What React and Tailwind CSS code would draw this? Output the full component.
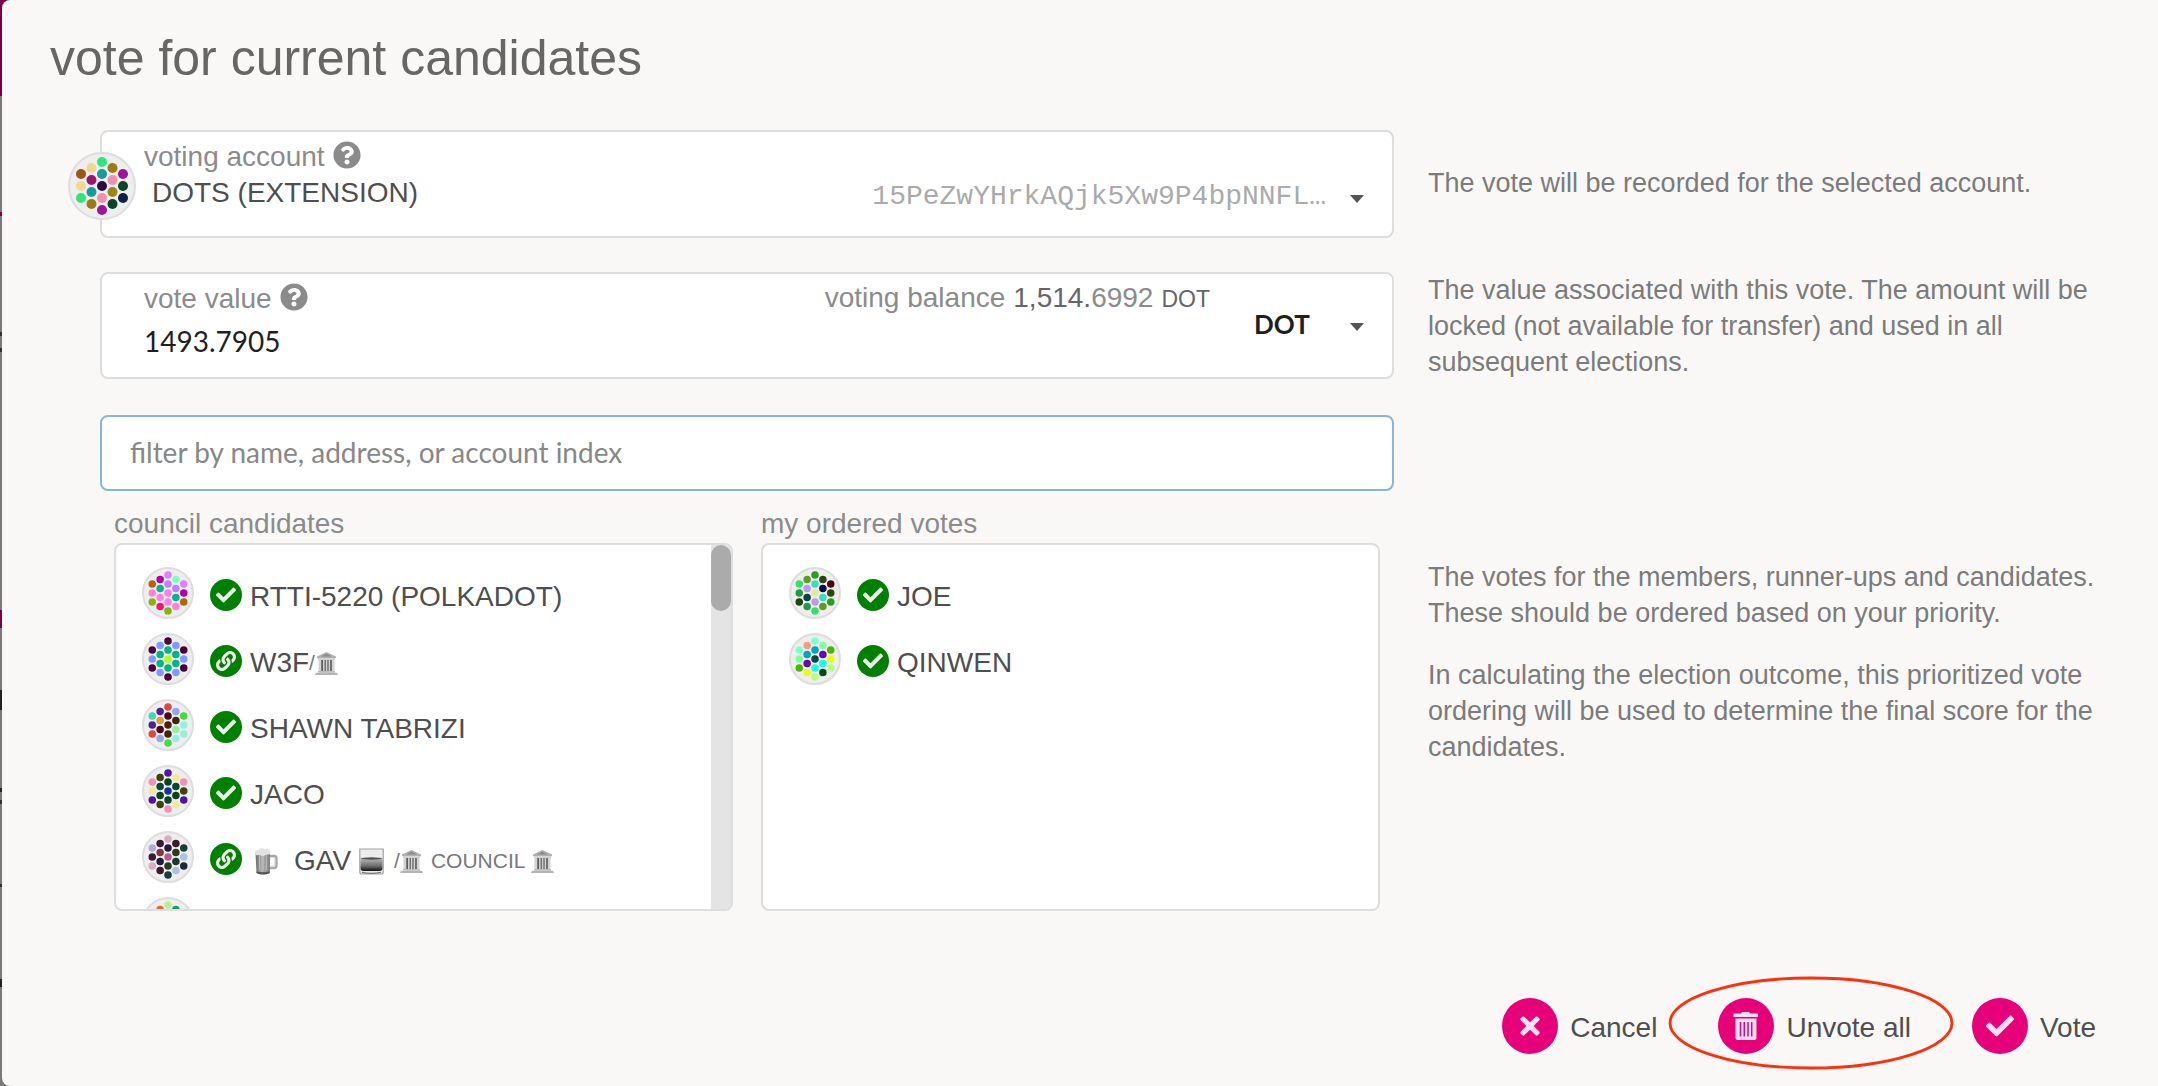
import React, { useState } from "react";
import { FaQuestionCircle, FaCheck, FaLink, FaTimes } from "react-icons/fa";

/* ---------------- Data ---------------- */
// 19 dots per icon, column by column, left to right and top to bottom
const DOTS = [
  [11, 20], [11, 32], [11, 44],
  [21.5, 14], [21.5, 26], [21.5, 38], [21.5, 50],
  [32, 8], [32, 20], [32, 32], [32, 44], [32, 56],
  [42.5, 14], [42.5, 26], [42.5, 38], [42.5, 50],
  [53, 20], [53, 32], [53, 44],
];

const ICONS = {
  dots: "#a05514 #efd892 #2ee67b #efd892 #9c1473 #149c9c #9c7a14 #2ee67b #149c9c #2a0a4a #f28fad #9c1499 #9c7a14 #f28fad #9c8514 #0a4527 #9c1499 #0a4527 #0a2345",
  rtti: "#b56400 #ff80d4 #85b500 #b300ac #00b590 #ff80e6 #ff0f6b #df80ff #bf80ff #ff80d4 #ff80e6 #85b500 #80ffc3 #bf80ff #00b590 #ff80d4 #df80ff #b300ac #b56400",
  w3f: "#4d0038 #8099ff #4d0038 #8099ff #00b582 #00b582 #8099ff #4d0038 #00b582 #b7ff0f #00b582 #4d0038 #8099ff #00b582 #00b582 #8099ff #4d0038 #8099ff #4d0038",
  shawn: "#3cdcae #4f1f9c #dc483c #4f1f9c #dc9f3c #450a16 #97a5ee #dc483c #450a16 #45240a #45240a #42dc3c #97a5ee #45240a #97eea3 #97eee3 #42dc3c #97eee3 #97eed3",
  jaco: "#f291b8 #f2eb91 #5214a8 #3a450a #0a4535 #0a4518 #3a450a #5214a8 #0a4518 #1931a8 #0a4535 #f291b8 #f2eb91 #0a4535 #0a4518 #f2eb91 #f291b8 #3a450a #5214a8",
  gav: "#aeacdb #3c1a33 #dbacc0 #3c1a33 #833640 #241a3c #3c1a2a #dbacc0 #241a3c #bd5a8c #2a3c1a #1a3c3a #3c1a2a #2a3c1a #1a3c26 #acc3db #1a3c3a #acc3db #1a2a3c",
  next: "#dc5a2c #b8f090 #1f9c7a #dc6a3c #b8f090 #1f9c7a #dc6a3c #b8f090 #1f9c7a #b8f090 #dc6a3c #1f9c7a #1f9c7a #b8f090 #1f9c7a #dc6a3c #b8f090 #1f9c7a #b8f090",
  joe: "#33e066 #1f9c45 #1f450a #5f9c1f #c397f0 #0a4545 #1f9c45 #2f9c1f #33e0bf #d9f097 #c397f0 #33e066 #2f450a #0a0a45 #33e0bf #5f9c1f #450a1a #2f450a #2f9c1f",
  qinwen: "#80ffc8 #80ff9e #4bb500 #ff9980 #00a5b5 #6b00b5 #e8ff0f #80ffc8 #00a5b5 #004d38 #0fffe7 #b8ff80 #80ff9e #6b00b5 #0fffe7 #004d1a #4bb500 #e8ff0f #b8ff80",
};

const candidates = [
  { id: "rtti", name: "RTTI-5220 (POLKADOT)" },
  { id: "w3f", name: "W3F", linked: true, temple: true },
  { id: "shawn", name: "SHAWN TABRIZI" },
  { id: "jaco", name: "JACO" },
  { id: "gav", name: "GAV", linked: true, drinks: true, temple: true, sub: "COUNCIL" },
  { id: "next", name: "" },
];

const votes = [
  { id: "joe", name: "JOE" },
  { id: "qinwen", name: "QINWEN" },
];

/* ---------------- Drawings ---------------- */
const Identicon = ({ id, className }) => (
  <svg viewBox="0 0 64 64" className={`shrink-0 rounded-full border-2 border-[#ddd] bg-[#eee] ${className}`} aria-hidden="true">
    {ICONS[id].split(" ").map((fill, i) => (
      <circle key={i} cx={DOTS[i][0]} cy={DOTS[i][1]} r="5" fill={fill} />
    ))}
  </svg>
);

const Temple = () => (
  <svg viewBox="0 0 23 23" className="size-[23px] shrink-0" aria-hidden="true">
    <path d="M11.5 0 21 4.5v1.8H2V4.500z" fill="#b0b0b0" />
    <path d="M11.500 1.500 17 4.400H6z" fill="#8c8c8c" />
    <path d="M3 6.300h17v1.700H3z" fill="#cfcfcf" />
    <path d="M4 8h15v11H4z" fill="#5a5a5a" />
    <path d="M3.500 8h2.800v11H3.500zM8 8h1.600v11H8zM10.800 8h1.600v11h-1.600zM13.600 8h1.600v11h-1.600zM16.800 8h2.700v11h-2.700z" fill="#d2d2d2" />
    <path d="M3 19h17v1.700H3z" fill="#bdbdbd" />
    <path d="M1 20.700h21L23 23H0z" fill="#b4b4b4" />
  </svg>
);

const Beer = () => (
  <svg viewBox="0 0 24 27" className="h-[27px] w-6 shrink-0" aria-hidden="true">
    <defs>
      <linearGradient id="beer" x1="0" x2="1">
        <stop offset="0" stopColor="#6a6a6a" />
        <stop offset="0.450" stopColor="#b4b4b4" />
        <stop offset="1" stopColor="#808080" />
      </linearGradient>
    </defs>
    <path d="M15.500 8h4.500q2.500 0 2.500 2.500v7q0 2.500-2.500 2.500h-4.500" fill="none" stroke="#a8a8a8" strokeWidth="2.400" />
    <path d="M16 9.800h3.500q1.200 0 1.200 1.200v6q0 1.200-1.200 1.200H16" fill="none" stroke="#d8d8d8" strokeWidth="1" />
    <path d="M1.500 5h14.500v20q-7 3-13.500 0z" fill="url(#beer)" />
    <path d="M5.500 7v15M9 7v15M12.500 7v15" stroke="#c8c8c8" strokeWidth="0.700" />
    <path d="M2.500 23.500q6.500 1.500 13 0V25q-6.500 3-13 0z" fill="#555" />
    <path d="M1 6Q0 2.500 4 2q3-3 6.500-1Q15 0 16.500 4q.5 2.500-2 2.500-2.500-.5-4 1T6 7q-2-.5-3 .5z" fill="#e2e2e2" />
  </svg>
);

const Glass = () => (
  <svg viewBox="0 0 25 27" className="h-[27px] w-[25px] shrink-0" aria-hidden="true">
    <defs>
      <linearGradient id="whisky" x1="0" y1="0" x2="0" y2="1">
        <stop offset="0" stopColor="#b8b8b8" />
        <stop offset="0.600" stopColor="#6c6c6c" />
        <stop offset="1" stopColor="#111" />
      </linearGradient>
    </defs>
    <path d="M.8 1v23q0 2 2 2h19.400q2 0 2-2V1z" fill="#ececec" stroke="#a2a2a2" strokeWidth="1.200" />
    <path d="M1.500 10.500h22V20q0 3-3 3h-16q-3 0-3-3z" fill="url(#whisky)" />
    <ellipse cx="12.500" cy="10.500" rx="10.800" ry="1.200" fill="#555" />
    <path d="M3 24.300q9.500 2 19 0" fill="none" stroke="#777" strokeWidth="1.200" />
  </svg>
);

const Caret = () => (
  <svg viewBox="0 0 14 8" className="h-2 w-3.5" aria-hidden="true">
    <path d="M0 0h14L7 8z" fill="#555" />
  </svg>
);

const TrashIcon = () => (
  <svg viewBox="0 0 26 28" className="h-7 w-[26px]" aria-hidden="true">
    <path
      fillRule="evenodd"
      fill="#ffe0f0"
      d="M9 0h7l1 1.500h7.500q.5 0 .5.500V5H0.500V2q0-.5.500-.5h7zM2.500 6.500h21V26q0 2-2 2h-17q-2 0-2-2zM6.700 10v14.500h1.500V10zM10.500 10v14.500H12V10zM14.300 10v14.500h1.500V10zM18 10v14.500h1.500V10z"
    />
  </svg>
);

/* ---------------- Pieces ---------------- */
const FieldLabel = ({ htmlFor, children }) => (
  <div className="flex items-center gap-2 text-[#8b8b8b]">
    <label htmlFor={htmlFor}>{children}</label>
    <FaQuestionCircle className="mb-1 size-7" aria-hidden="true" />
  </div>
);

const Person = ({ person }) => (
  <li className="flex h-[66px] items-center gap-4">
    <Identicon id={person.id} className="size-[52px]" />
    {person.name && (
      <div className="flex items-center gap-2 pt-1 text-[#4e4e4e]">
        <span className="flex size-8 shrink-0 items-center justify-center rounded-full bg-[#008000] text-[#eee]">
          {person.linked ? <FaLink className="size-5" /> : <FaCheck className="size-5" />}
        </span>
        <span className="flex items-center pt-1">
          {person.drinks && <span className="pr-4 pl-1"><Beer /></span>}
          <span>{person.name}</span>
          {person.drinks && <span className="pr-2.5 pl-2"><Glass /></span>}
          {person.temple && (
            <span className="flex items-center text-[21px] text-[#777]">
              <span>/</span>
              <Temple />
              {person.sub && <span className="pr-1.5 pl-2">{person.sub}</span>}
              {person.sub && <Temple />}
            </span>
          )}
        </span>
      </div>
    )}
  </li>
);

const ActionButton = ({ label, icon, onClick }) => (
  <button type="button" onClick={onClick} className="flex items-center gap-3 text-[#4e4e4e]">
    <span className="flex size-14 items-center justify-center rounded-full bg-[#e6007a] text-[#ffe0f0]">{icon}</span>
    <span className="pt-1">{label}</span>
  </button>
);

const Help = ({ children }) => (
  <div className="-mt-0.5 flex flex-col justify-center gap-[26px] text-[27px] text-[#7b7b7b]">{children}</div>
);

// Sliver of the page that stays visible beside the dialog
const Backdrop = () => (
  <div className="flex w-3 flex-col bg-[#7a7a7a] [grid-area:1/1]" aria-hidden="true">
    <div className="h-24 bg-[#7a0041]" />
    <div className="mt-[116px] h-1 bg-[#7a0041]" />
    <div className="mt-[116px] h-1 bg-[#333]" />
    <div className="mt-3 h-1 bg-[#333]" />
    <div className="mt-[258px] h-[18px] bg-[#7a0041]" />
    <div className="mt-[62px] h-5 bg-[#222]" />
    <div className="mt-[78px] h-1 bg-[#222]" />
    <div className="mt-2 h-1 bg-[#333]" />
    <div className="mt-20 h-[3px] bg-[#333]" />
    <div className="mt-[92px] h-2 bg-[#222]" />
  </div>
);

/* ---------------- Component ---------------- */
export default function App() {
  const [value, setValue] = useState("1493.7905");
  const [filter, setFilter] = useState("");
  const [ordered, setOrdered] = useState(votes);

  const shown = candidates.filter((c) => c.name.toLowerCase().includes(filter.toLowerCase()));

  return (
    <div className="grid min-h-screen font-['Liberation_Sans',Arial,sans-serif] text-[28px] leading-9">
      <Backdrop />
      <main className="z-10 ml-0.5 flex flex-col rounded-l-lg bg-[#f9f8f7] [grid-area:1/1]">
        <h1 className="px-12 pt-7 pb-[42px] text-[50px] leading-[60px] text-[#666]">vote for current candidates</h1>

        <div className="grid grid-cols-[1.92fr_1fr] gap-x-[34px] gap-y-[34px] pr-14 pl-[98px]">
          <section className="-ml-8 flex items-center">
            <Identicon id="dots" className="z-10 mt-1 size-[68px]" />
            <div className="-ml-9 flex-1 rounded-lg border-2 border-[#ddd] bg-white pt-[7px] pb-[21px] pl-[42px]">
              <FieldLabel htmlFor="account">voting account</FieldLabel>
              <div className="grid items-start">
                <select id="account" className="w-full appearance-none bg-transparent pl-2 text-[#4e4e4e] outline-none [grid-area:1/1]">
                  <option>DOTS (EXTENSION)</option>
                </select>
                <div className="pointer-events-none flex items-center justify-end gap-6 pt-1 pr-7 [grid-area:1/1]">
                  <span className="font-['Liberation_Mono',monospace] text-[#aaa]">15PeZwYHrkAQjk5Xw9P4bpNNFL…</span>
                  <span className="pt-1"><Caret /></span>
                </div>
              </div>
            </div>
          </section>
          <Help>
            <p>The vote will be recorded for the selected account.</p>
          </Help>

          <section className="mb-0.5 flex rounded-lg border-2 border-[#ddd] bg-white">
            <div className="flex-1 pt-1.5 pl-[42px]">
              <div className="flex justify-between pr-3.5">
                <FieldLabel htmlFor="value">vote value</FieldLabel>
                <div className="flex items-baseline gap-2 text-[#8b8b8b]">
                  <span>voting balance</span>
                  <span><span className="text-[#666]">1,514.</span>6992</span>
                  <span className="text-[23px] text-[#666]">DOT</span>
                </div>
              </div>
              <input
                id="value"
                value={value}
                onChange={(e) => setValue(e.target.value)}
                className="mt-1.5 mb-[18px] block h-9 w-full bg-transparent font-[Lato,sans-serif] text-[#1f1f1f] outline-none"
              />
            </div>
            <div className="grid w-[168px] items-center font-[Lato,sans-serif]">
              <select aria-label="unit" className="h-full w-full appearance-none bg-transparent pb-1 pl-[30px] text-[26px] font-bold text-[#1f1f1f] outline-none [grid-area:1/1]">
                <option>DOT</option>
              </select>
              <span className="pointer-events-none flex justify-end pt-0.5 pr-7 [grid-area:1/1]"><Caret /></span>
            </div>
          </section>
          <Help>
            <p>The value associated with this vote. The amount will be locked (not available for transfer) and used in all subsequent elections.</p>
          </Help>

          <section>
            <input
              value={filter}
              onChange={(e) => setFilter(e.target.value)}
              aria-label="filter candidates"
              placeholder="filter by name, address, or account index"
              className="block h-[76px] w-full rounded-lg border-2 border-[#85b7d9] bg-white px-7 pb-0.5 font-[Lato,sans-serif] text-[#1f1f1f] outline-none placeholder:text-[#878787]"
            />
            <div className="grid grid-cols-2 gap-7 px-3.5 pt-[15px]">
              <div>
                <h2 className="mb-px text-[#8b8b8b]">council candidates</h2>
                <div className="flex h-[368px] overflow-hidden rounded-lg border-2 border-[#ddd] bg-white">
                  <ul className="flex-1 overflow-hidden pt-[15px] pl-[26px]">
                    {shown.map((c) => (
                      <Person key={c.id} person={c} />
                    ))}
                  </ul>
                  <div className="w-5 bg-[#e4e4e4]">
                    <div className="h-[66px] rounded-full bg-[#ababab]" />
                  </div>
                </div>
              </div>
              <div>
                <h2 className="mb-px text-[#8b8b8b]">my ordered votes</h2>
                <ul className="h-[368px] rounded-lg border-2 border-[#ddd] bg-white pt-[15px] pl-[26px]">
                  {ordered.map((c) => (
                    <Person key={c.id} person={c} />
                  ))}
                </ul>
              </div>
            </div>
          </section>
          <Help>
            <p>The votes for the members, runner-ups and candidates. These should be ordered based on your priority.</p>
            <p>In calculating the election outcome, this prioritized vote ordering will be used to determine the final score for the candidates.</p>
          </Help>
        </div>

        <footer className="mt-auto flex items-center justify-end gap-[61px] pr-[62px] pb-8">
          <ActionButton label="Cancel" icon={<FaTimes className="size-7" />} />
          <div className="relative">
            <ActionButton label="Unvote all" icon={<TrashIcon />} onClick={() => setOrdered([])} />
            <svg viewBox="0 0 286 94" className="pointer-events-none absolute -top-[22px] -left-[50px] h-[94px] w-[286px]" aria-hidden="true">
              <ellipse cx="143" cy="47" rx="141" ry="45" fill="none" stroke="#ff2f0a" strokeWidth="2.800" />
            </svg>
          </div>
          <ActionButton label="Vote" icon={<FaCheck className="size-7" />} />
        </footer>
      </main>
    </div>
  );
}
